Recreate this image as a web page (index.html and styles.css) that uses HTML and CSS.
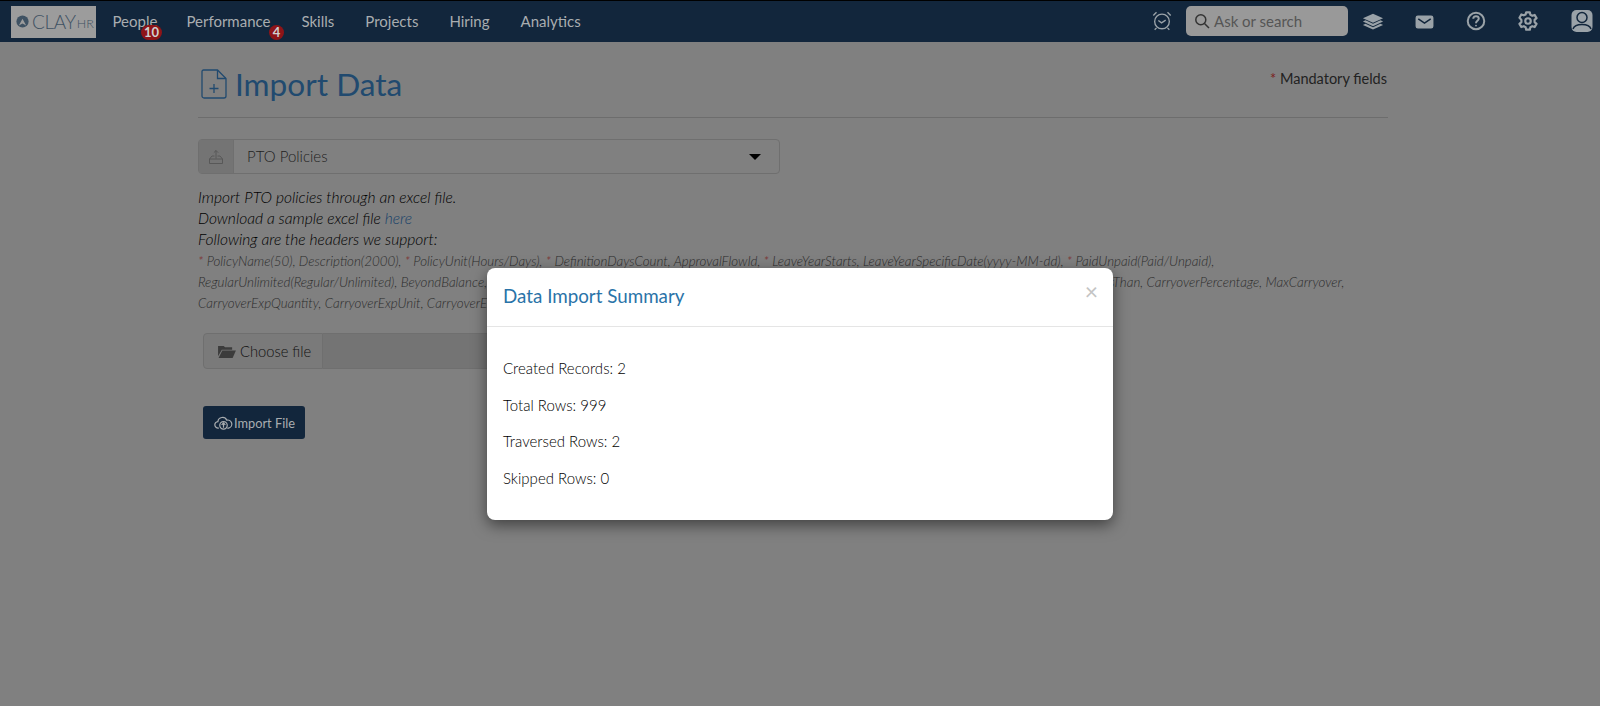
FILE: index.html
```html
<!DOCTYPE html>
<html lang="en">
<head>
<meta charset="utf-8">
<title>Import Data</title>
<link rel="stylesheet" href="styles.css">
</head>
<body>
<nav class="navbar">
  <div class="logo"><svg class="logo-mark" viewBox="0 0 16 16"><circle cx="8" cy="8" r="7.500" fill="#3f5263"/><path d="M3.500 13 8 4.500l4.500 8.500-4.500-2.500z" fill="#9c9c9c"/></svg><span class="logo-clay">CLAY</span><span class="logo-hr">HR</span></div>
  <ul class="menu">
    <li class="menu-item menu-first">People<span class="badge badge-people">10</span></li>
    <li class="menu-item">Performance<span class="badge badge-perf">4</span></li>
    <li class="menu-item">Skills</li>
    <li class="menu-item">Projects</li>
    <li class="menu-item">Hiring</li>
    <li class="menu-item">Analytics</li>
  </ul>
  <div class="nav-right">
    <svg class="nav-icon clock" viewBox="0 0 24 24" fill="none" stroke="#9aa2a8" stroke-width="1.500"><circle cx="12" cy="12.500" r="8"/><path d="M8 11.500l3.500 2.500 4.500-3M2.500 6 6 2.500M21.500 6 18 2.500M6 19.500l-2 2M18 19.500l2 2"/></svg>
    <div class="search"><svg class="search-icon" viewBox="0 0 16 16" fill="none" stroke="#333" stroke-width="1.500"><circle cx="6.800" cy="6.800" r="5"/><path d="M10.500 10.500 15 15"/></svg><span>Ask or search</span></div>
    <svg class="nav-icon stack" viewBox="0 0 24 24" fill="#9aa2a8"><path d="M12 4 23 9l-11 5L1 9z"/><path d="M3.800 11.300 1 12.600l11 5 11-5-2.800-1.300-8.200 3.800z"/><path d="M3.800 15 1 16.300l11 5 11-5L20.200 15 12 18.800z"/></svg>
    <svg class="mail" viewBox="0 0 24 18" fill="none" stroke="#9aa2a8"><rect x="1.500" y="1.500" width="21" height="15" rx="2" fill="#9aa2a8" stroke-width="2"/><path d="M4 5l8 5.500L20 5" stroke="#12263c" stroke-width="2"/></svg>
    <svg class="nav-icon help" viewBox="0 0 24 24" fill="none" stroke="#9aa2a8" stroke-width="2.200"><circle cx="12" cy="12" r="9"/><path d="M9 9.500C9 7.500 10.500 6.800 12 6.800c1.800 0 3 1.100 3 2.600 0 2.400-3 2.400-3 5"/><circle cx="12" cy="17" r="1" fill="#9aa2a8" stroke="none"/></svg>
    <svg class="nav-icon gear" viewBox="0 0 24 24" fill="none" stroke="#9aa2a8" stroke-width="2.400" stroke-linejoin="round"><path d="M10 2.500h4l.6 2.800 2 1 2.700-.9 2 3.500-2.100 1.900v2.400l2.100 1.900-2 3.500-2.700-.9-2 1-.6 2.800h-4l-.6-2.800-2-1-2.700.9-2-3.500 2.100-1.900v-2.400L2.700 8.400l2-3.500 2.700.9 2-1z"/><circle cx="12" cy="12" r="3"/></svg>
    <svg class="nav-icon user" viewBox="0 0 24 24"><rect x="1.500" y="1" width="21" height="22" rx="5" fill="#9aa2a8"/><circle cx="12" cy="8.500" r="5" fill="none" stroke="#12263c" stroke-width="1.500"/><path d="M3 20c1-3 5-4.500 9-4.500s8 1.500 9 4.500" fill="none" stroke="#12263c" stroke-width="1.500"/></svg>
  </div>
</nav>

<main class="page">
  <header class="page-head">
    <h1 class="page-title"><svg class="title-icon" viewBox="0 0 26 30" fill="none" stroke="#214a6f" stroke-width="1.300"><path d="M2.500 1h14L25 9.500V27a2 2 0 0 1-2 2H3a2 2 0 0 1-2-2V2.500A1.500 1.500 0 0 1 2.500 1z"/><path d="M16.500 1v8.500H25M13 15v9M8.500 19.500h9"/></svg>Import Data</h1>
    <div class="mandatory"><span class="req">*</span> Mandatory fields</div>
  </header>

  <div class="select-group">
    <span class="addon"><svg class="addon-icon" viewBox="0 0 16 16" fill="none" stroke="#555" stroke-width="0.900"><path d="M1.500 10h13v4.500h-13zM1.500 10 4 7h2.500M14.500 10 12 7H9.500M8 9.500V1.500M5.800 3.700 8 1.500l2.200 2.200"/></svg></span>
    <span class="select-value">PTO Policies</span>
    <span class="caret"></span>
  </div>

  <div class="intro">
    <div>Import PTO policies through an excel file.</div>
    <div>Download a sample excel file <a class="link">here</a></div>
    <div>Following are the headers we support:</div>
  </div>
  <div class="headers">
    <div><span class="req">*</span> PolicyName(50), Description(2000), <span class="req">*</span> PolicyUnit(Hours/Days), <span class="req">*</span> DefinitionDaysCount, ApprovalFlowId, <span class="req">*</span> LeaveYearStarts, LeaveYearSpecificDate(yyyy-MM-dd), <span class="req">*</span> PaidUnpaid(Paid/Unpaid),</div>
    <div>RegularUnlimited(Regular/Unlimited), BeyondBalance, BeyondBalanceLimit, AccrualMethod, AccrualRate, AccrualFrequency, AccrualMax, MinimumRequest, CarryoverLessThan, CarryoverPercentage, MaxCarryover,</div>
    <div>CarryoverExpQuantity, CarryoverExpUnit, CarryoverExpiry</div>
  </div>

  <div class="file-row">
    <span class="file-btn"><svg class="folder" viewBox="0 0 20 16" fill="#3c3c3c"><path d="M1 2h6l1.500 1.500H16V6H5L1 13z"/><path d="M5.500 7H20l-3.500 8H1.500z"/></svg>Choose file</span>
    <span class="file-input"></span>
  </div>

  <button class="import-btn" type="button"><svg class="cloud" viewBox="0 0 20 16" fill="none" stroke="#a9adb0" stroke-width="1.300"><path d="M5 14H4.500a3.500 3.500 0 0 1-.5-7 5 5 0 0 1 9.500-1.500 4.200 4.200 0 0 1 2 8.500H14"/><circle cx="10" cy="11" r="4" fill="#12263c"/><path d="M10 13.500V8.500M8 10.500l2-2 2 2"/></svg>Import File</button>
</main>

<div class="modal" role="dialog">
  <div class="modal-header">
    <h2 class="modal-title">Data Import Summary</h2>
    <span class="close">×</span>
  </div>
  <div class="modal-body">
    <p class="stat">Created Records: 2</p>
    <p class="stat">Total Rows: 999</p>
    <p class="stat">Traversed Rows: 2</p>
    <p class="stat">Skipped Rows: 0</p>
  </div>
</div>
</body>
</html>
```

FILE: styles.css
```css
* { box-sizing: border-box; }
html, body { height: 100%; }
body {
  margin: 0;
  background: #808080;
  color: #111;
  font-family: Lato, "Open Sans", sans-serif;
  font-size: 15px;
  font-weight: 300;
  overflow: hidden;
}
.navbar {
  display: flex;
  align-items: center;
  height: 42px;
  padding: 0 0 2px 11px;
  background: #12263c;
  border-top: 1px solid #000;
}
.logo {
  display: flex;
  align-items: center;
  width: 85px;
  height: 32px;
  margin-top: 2px;
  padding-left: 5px;
  background: #9c9c9c;
  color: #3f5263;
}
.logo-mark { width: 13px; height: 13px; margin-right: 3px; }
.logo-clay { font-size: 19px; letter-spacing: -0.3px; }
.logo-hr { font-size: 12.500px; margin-left: 1px; margin-top: 3px; }
.menu {
  display: flex;
  list-style: none;
  margin: 0 0 0 1px;
  padding: 0;
}
.menu-item {
  position: relative;
  padding: 0 15.500px;
  color: #a9adb0;
  font-weight: 400;
  line-height: 38px;
}
.menu-first { padding-right: 13.500px; }
.badge {
  position: absolute;
  top: 23px;
  height: 15px;
  border-radius: 8px;
  background: #8e1418;
  color: #d0d0d0;
  font-size: 13px;
  font-weight: 700;
  line-height: 15px;
  text-align: center;
}
.badge-people { left: 44px; width: 21px; }
.badge-perf { left: 98px; width: 15px; }
.nav-right {
  display: flex;
  align-items: center;
  margin-left: auto;
  height: 100%;
}
.nav-icon { flex: none; width: 22px; height: 22px; }
.clock { margin-right: 13px; }
.search {
  display: flex;
  align-items: center;
  width: 162px;
  height: 30px;
  padding-left: 8px;
  border-radius: 5px;
  background: #999;
  color: #555;
  font-weight: 400;
}
.search-icon { width: 16px; height: 16px; margin-right: 4px; }
.stack { margin-left: 14px; }
.mail { flex: none; width: 19px; height: 14px; margin: 3px 1px 0 31px; }
.help { margin-left: 30px; }
.gear { margin-left: 30px; }
.user { margin-left: 31px; width: 24px; height: 24px; margin-right: 6px; }

.page { width: 1190px; margin-left: 198px; }
.page-head {
  display: flex;
  justify-content: space-between;
  height: 76px;
  border-bottom: 1px solid #6d6d6d;
}
.page-title {
  display: flex;
  align-items: center;
  height: 84px;
  margin: 0;
  color: #214a6f;
  font-size: 31.600px;
  font-weight: 400;
}
.title-icon { width: 26px; height: 30px; margin: 0 8px 0 3px; }
.mandatory { padding-top: 27px; line-height: 20px; font-weight: 400; font-size: 14.500px; margin-right: 1px; color: #222; }
.req { color: #7c1d1d; }
.select-group {
  display: flex;
  align-items: center;
  width: 582px;
  height: 35px;
  margin-top: 21px;
  border: 1px solid #6f6f6f;
  border-radius: 4px;
  color: #222;
}
.addon {
  display: flex;
  align-items: center;
  justify-content: center;
  width: 35px;
  height: 100%;
  background: #747474;
  border-right: 1px solid #6f6f6f;
}
.addon-icon { width: 16px; height: 16px; }
.select-value { flex: 1; padding: 0 0 2px 13px; }
.caret {
  width: 0;
  height: 0;
  margin-right: 18px;
  border-left: 6px solid transparent;
  border-right: 6px solid transparent;
  border-top: 6px solid #000;
}
.intro {
  margin-top: 13px;
  font-size: 15.600px;
  font-style: italic;
  line-height: 21px;
  color: #000;
}
.link { color: #17406a; }
.headers {
  margin-top: 1px;
  font-size: 13.360px;
  font-style: italic;
  line-height: 21px;
  color: #2c2c2c;
  white-space: nowrap;
}
.file-row {
  display: flex;
  height: 36px;
  margin: 19px 0 0 5px;
}
.file-btn {
  display: flex;
  align-items: center;
  width: 120px;
  padding-left: 13px;
  border: 1px solid #6f6f6f;
  border-radius: 4px 0 0 4px;
  background: #7a7a7a;
  color: #111;
  font-size: 14.700px;
}
.folder { width: 19px; height: 15px; margin-right: 4px; }
.file-input {
  width: 400px;
  background: #747474;
  border: 1px solid #6f6f6f;
  border-left: 0;
}
.import-btn {
  display: flex;
  align-items: center;
  width: 102px;
  height: 33px;
  margin: 37px 0 0 5px;
  padding: 0 0 0 11px;
  border: 0;
  border-radius: 3px;
  background: #12263c;
  color: #a9adb0;
  font-family: inherit;
  font-size: 12.800px;
}
.cloud { width: 19px; height: 15px; margin-right: 1px; }

.modal {
  position: absolute;
  left: 487px;
  top: 268px;
  width: 626px;
  height: 252px;
  border-radius: 8px;
  background: #fff;
  color: #000;
  box-shadow: 0 5px 15px rgba(0, 0, 0, 0.5);
}
.modal-header {
  position: relative;
  height: 59px;
  padding: 15px 16px;
  border-bottom: 1px solid #e5e5e5;
}
.modal-title {
  margin: 0;
  color: #2a73a8;
  font-size: 18.800px;
  font-weight: 400;
  line-height: 26px;
}
.close {
  position: absolute;
  top: 10px;
  right: 15px;
  color: #c4c4c4;
  font-size: 23px;
  font-weight: 400;
  line-height: 26px;
}
.modal-body { padding: 31px 16px 0; }
.stat { margin: 0 0 16.700px; line-height: 20px; }
```
